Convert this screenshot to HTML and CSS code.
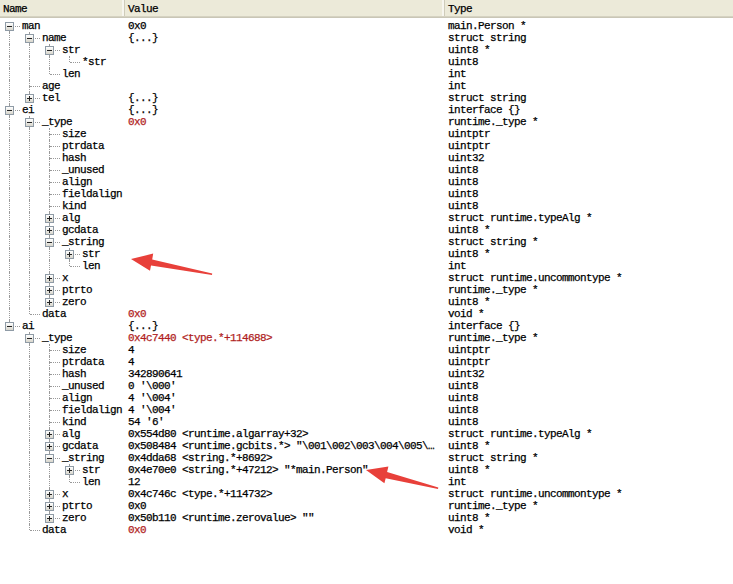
FILE: index.html
```html
<!DOCTYPE html>
<html>
<head>
    <title>Watch</title>
    <meta http-equiv="Content-Type" content="text/html; charset=utf-8" />
    <link rel="stylesheet" href="styles.css">
</head>
<body>
<div class="watch">
    <div class="header">
        <div class="head-cell col-name">Name</div>
        <div class="head-cell col-value">Value</div>
        <div class="head-cell col-type">Type</div>
    </div>
    <div class="rows" id="rows"></div>
</div>

<!-- стрелки-пометки поверх окна -->
<svg class="marks" width="733" height="584" viewBox="0 0 733 584">
    <polygon fill="#e8403a" points="131,259 150.0,270.7 151.0,265.5 212,275 212.2,273.6 152.2,259.5 153.2,253.6"/>
    <polygon fill="#e8403a" points="366,470 384.4,483.2 385.7,478.3 438,489 438.3,487.5 387.1,472.0 388.4,466.6"/>
</svg>

<script>
// level, name, value, type, expander, red value
var rows = [
    [0, 'man', '0x0', 'main.Person *', '-'],
    [1, 'name', '{...}', 'struct string', '-'],
    [2, 'str', '', 'uint8 *', '-'],
    [3, '*str', '', 'uint8', ''],
    [2, 'len', '', 'int', ''],
    [1, 'age', '', 'int', ''],
    [1, 'tel', '{...}', 'struct string', '+'],
    [0, 'ei', '{...}', 'interface {}', '-'],
    [1, '_type', '0x0', 'runtime._type *', '-', 1],
    [2, 'size', '', 'uintptr', ''],
    [2, 'ptrdata', '', 'uintptr', ''],
    [2, 'hash', '', 'uint32', ''],
    [2, '_unused', '', 'uint8', ''],
    [2, 'align', '', 'uint8', ''],
    [2, 'fieldalign', '', 'uint8', ''],
    [2, 'kind', '', 'uint8', ''],
    [2, 'alg', '', 'struct runtime.typeAlg *', '+'],
    [2, 'gcdata', '', 'uint8 *', '+'],
    [2, '_string', '', 'struct string *', '-'],
    [3, 'str', '', 'uint8 *', '+'],
    [3, 'len', '', 'int', ''],
    [2, 'x', '', 'struct runtime.uncommontype *', '+'],
    [2, 'ptrto', '', 'runtime._type *', '+'],
    [2, 'zero', '', 'uint8 *', '+'],
    [1, 'data', '0x0', 'void *', '', 1],
    [0, 'ai', '{...}', 'interface {}', '-'],
    [1, '_type', '0x4c7440 <type.*+114688>', 'runtime._type *', '-', 1],
    [2, 'size', '4', 'uintptr', ''],
    [2, 'ptrdata', '4', 'uintptr', ''],
    [2, 'hash', '342890641', 'uint32', ''],
    [2, '_unused', "0 '\\000'", 'uint8', ''],
    [2, 'align', "4 '\\004'", 'uint8', ''],
    [2, 'fieldalign', "4 '\\004'", 'uint8', ''],
    [2, 'kind', "54 '6'", 'uint8', ''],
    [2, 'alg', '0x554d80 <runtime.algarray+32>', 'struct runtime.typeAlg *', '+'],
    [2, 'gcdata', '0x508484 <runtime.gcbits.*> "\\001\\002\\003\\004\\005\\\u2026', 'uint8 *', '+'],
    [2, '_string', '0x4dda68 <string.*+8692>', 'struct string *', '-'],
    [3, 'str', '0x4e70e0 <string.*+47212> "*main.Person"', 'uint8 *', '+'],
    [3, 'len', '12', 'int', ''],
    [2, 'x', '0x4c746c <type.*+114732>', 'struct runtime.uncommontype *', '+'],
    [2, 'ptrto', '0x0', 'runtime._type *', '+'],
    [2, 'zero', '0x50b110 <runtime.zerovalue> ""', 'uint8 *', '+'],
    [1, 'data', '0x0', 'void *', '', 1]
];

// есть ли ещё узел того же уровня ниже строки i
function hasSibling(i, level) {
    for (var j = i + 1; j < rows.length; j++) {
        if (rows[j][0] < level) return false;
        if (rows[j][0] == level) return true;
    }
    return false;
}

function el(tag, cls, text) {
    var e = document.createElement(tag);
    e.className = cls;
    if (text) e.textContent = text;
    return e;
}

var list = document.getElementById('rows');
for (var i = 0; i < rows.length; i++) {
    var r = rows[i];
    var row = el('div', 'row');
    var nameCell = el('div', 'cell col-name');

    for (var k = 0; k < r[0]; k++) {
        nameCell.appendChild(el('span', hasSibling(i, k) ? 'guide pass' : 'guide'));
    }
    var node = el('span', 'guide node');
    if (i > 0) node.appendChild(el('i', 'up'));
    if (hasSibling(i, r[0])) node.appendChild(el('i', 'down'));
    node.appendChild(el('i', 'dash'));
    if (r[4]) node.appendChild(el('b', r[4] == '+' ? 'exp plus' : 'exp'));
    nameCell.appendChild(node);
    nameCell.appendChild(el('span', 'label', r[1]));

    row.appendChild(nameCell);
    row.appendChild(el('div', r[5] ? 'cell col-value red' : 'cell col-value', r[2]));
    row.appendChild(el('div', 'cell col-type', r[3]));
    list.appendChild(row);
}
</script>

</body>
</html>
```

FILE: styles.css
```css
html, body {margin: 0; height: 100%; overflow: hidden; background: white;}
.watch{
    width: 733px;
    font-family: 'Liberation Mono', monospace;
    font-size: 11px;
    letter-spacing: -0.6px;
    color: black;
    -webkit-text-stroke: 0.25px black;
}
.header{
    display: flex;
    height: 16px;
    background: #ecead9;
    border-bottom: 1px solid #d5d2c1;
    box-shadow: 0 1px 0 #c9c6b6;
}
.head-cell{
    display: flex;
    align-items: center;
    padding-left: 3px;
    box-sizing: border-box;
    line-height: 12px;
    padding-top: 2px;
}
.head-cell.col-name, .head-cell.col-value{
    border-right: 1px solid #cfccba;
    box-shadow: inset -2px 0 0 #f7f6ef;
}
.rows{
    padding-top: 3px;
}
.row{
    display: flex;
    height: 12px;
    line-height: 12px;
}
.col-name{
    width: 125px;
    flex: none;
}
.col-value{
    width: 320px;
    flex: none;
}
.col-type{
    flex: 1;
}
.cell{
    white-space: pre;
    overflow: hidden;
    box-sizing: border-box;
}
.cell.col-name{
    display: flex;
}
.cell.col-value, .cell.col-type{
    padding-left: 3px;
}
.red{
    color: #b01e1e;
    -webkit-text-stroke-color: #b01e1e;
}
.label{
    padding-left: 2px;
}

/* линии дерева */
.guide{
    position: relative;
    width: 20px;
    height: 12px;
    flex: none;
}
.guide.pass::before{
    content: "";
    position: absolute;
    left: 9px;
    top: 0;
    height: 12px;
    border-left: 1px dotted #999999;
}
.guide i{
    position: absolute;
}
.guide .up{
    left: 9px;
    top: 0;
    height: 6px;
    border-left: 1px dotted #999999;
}
.guide .down{
    left: 9px;
    top: 6px;
    height: 6px;
    border-left: 1px dotted #999999;
}
.guide .dash{
    left: 10px;
    top: 6px;
    width: 10px;
    border-top: 1px dotted #999999;
}
.exp{
    position: absolute;
    left: 5px;
    top: 2px;
    width: 7px;
    height: 7px;
    border: 1px solid #8f9ba6;
    background: linear-gradient(#ffffff, #d8d6cc);
}
.exp::before{
    content: "";
    position: absolute;
    left: 1px;
    top: 3px;
    width: 5px;
    height: 1px;
    background: #222;
}
.exp.plus::after{
    content: "";
    position: absolute;
    left: 3px;
    top: 1px;
    width: 1px;
    height: 5px;
    background: #222;
}
.marks{
    position: absolute;
    left: 0;
    top: 0;
    pointer-events: none;
}
```
